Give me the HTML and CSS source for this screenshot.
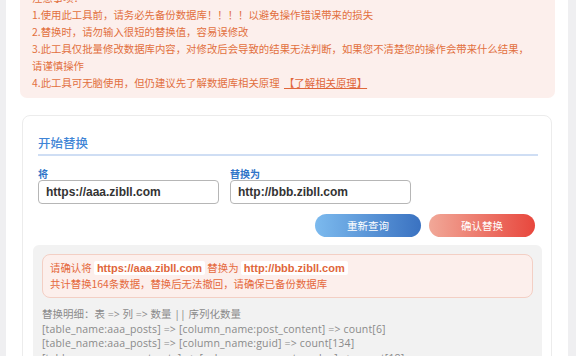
FILE: index.html
```html
<!DOCTYPE html>
<html lang="zh-CN">
<head>
<meta charset="utf-8">
<title>数据库批量替换</title>
<link rel="stylesheet" href="styles.css">
</head>
<body>
<div class="page">
  <div class="notice">
    <p>注意事项：</p>
    <p>1.使用此工具前，请务必先备份数据库！！！！以避免操作错误带来的损失</p>
    <p>2.替换时，请勿输入很短的替换值，容易误修改</p>
    <p>3.此工具仅批量修改数据库内容，对修改后会导致的结果无法判断，如果您不清楚您的操作会带来什么结果，请谨慎操作</p>
    <p>4.此工具可无脑使用，但仍建议先了解数据库相关原理 <a class="notice-link" href="#">【了解相关原理】</a></p>
  </div>

  <div class="card">
    <div class="card-title">开始替换</div>
    <div class="form-row">
      <div class="field">
        <label class="field-label">将</label>
        <input class="field-input" type="text" value="https://aaa.zibll.com">
      </div>
      <div class="field">
        <label class="field-label">替换为</label>
        <input class="field-input" type="text" value="http://bbb.zibll.com">
      </div>
    </div>
    <div class="actions">
      <button class="btn btn-blue" type="button">重新查询</button>
      <button class="btn btn-red" type="button">确认替换</button>
    </div>
    <div class="result">
      <div class="alert">
        <div>请确认将 <code class="hl">https://aaa.zibll.com</code> 替换为 <code class="hl">http://bbb.zibll.com</code></div>
        <div>共计替换164条数据，替换后无法撤回，请确保已备份数据库</div>
      </div>
      <div class="details">
        <div>替换明细：表 =&gt; 列 =&gt; 数量 || 序列化数量</div>
        <div class="row">[table_name:aaa_posts] =&gt; [column_name:post_content] =&gt; count[6]</div>
        <div class="row">[table_name:aaa_posts] =&gt; [column_name:guid] =&gt; count[134]</div>
        <div class="row">[table_name:aaa_postmeta] =&gt; [column_name:meta_value] =&gt; count[18]</div>
        <div class="row">[table_name:aaa_options] =&gt; [column_name:option_value] =&gt; count[6]</div>
      </div>
    </div>
  </div>
</div>
</body>
</html>
```
FILE: styles.css
```css
html, body {
  margin: 0;
  padding: 0;
}
body {
  background: #efeff1;
  font-family: "Noto Sans CJK SC", sans-serif;
  overflow: hidden;
}
.page {
  margin: -17px 8px 0 6px;
  padding: 0 13px 40px 14px;
  background: #ffffff;
  min-height: 420px;
}
.notice {
  background: #fcefec;
  border-radius: 0 0 7px 7px;
  padding: 6px 26px 7px 12px;
  color: #e26f3e;
  font-size: 10.4px;
  line-height: 17px;
}
.notice p {
  margin: 0;
}
.notice-link {
  color: #e0663a;
  text-decoration: underline;
  margin-left: 2px;
}
.card {
  margin: 17px 3px 0 2px;
  border: 1px solid #ececec;
  border-radius: 8px;
  padding: 17px 13px 0 15px;
  background: #fff;
}
.card-title {
  font-size: 12.5px;
  line-height: 20px;
  font-weight: 500;
  color: #3f85d6;
  padding-bottom: 1px;
  border-bottom: 2px solid #cfdef4;
}
.form-row {
  display: grid;
  grid-template-columns: 181px 181px;
  column-gap: 11px;
  margin-top: 12px;
}
.field {
  display: flex;
  flex-direction: column;
}
.field-label {
  font-size: 10px;
  line-height: 12px;
  font-weight: bold;
  color: #2f74c8;
}
.field-input {
  box-sizing: border-box;
  height: 24px;
  margin: 0;
  padding: 0 7px;
  border: 1px solid #b6b6b6;
  border-radius: 4px;
  background: #fff;
  font-family: "Liberation Sans", Arial, sans-serif;
  font-weight: bold;
  font-size: 12px;
  color: #333;
  outline: none;
}
.actions {
  display: flex;
  justify-content: flex-end;
  gap: 8px;
  margin-top: 10px;
  padding-right: 3px;
}
.btn {
  width: 106px;
  height: 23px;
  border: none;
  border-radius: 12px;
  color: #fff;
  font-family: "Noto Sans CJK SC", sans-serif;
  font-size: 10.5px;
  padding: 0;
  cursor: pointer;
}
.btn-blue {
  background: linear-gradient(90deg, #7cbaee, #3a72c1);
}
.btn-red {
  background: linear-gradient(90deg, #f1a898, #e8473d);
}
.result {
  margin: 8px -4px 0 -5px;
  background: #f2f2f2;
  border-radius: 6px 6px 0 0;
  padding: 9px 9px 20px;
}
.alert {
  border: 1px solid #f3cfc4;
  background: #fcefec;
  border-radius: 8px;
  padding: 5px 7px;
  color: #e5693d;
  font-size: 10.4px;
  line-height: 16px;
}
.hl {
  background: #fff;
  font-family: "Liberation Sans", Arial, sans-serif;
  font-weight: bold;
  font-size: 11px;
  padding: 1px 3px;
  border-radius: 2px;
  color: #e0663a;
}
.details {
  margin-top: 9px;
  color: #8a8a8a;
  font-family: "Open Sans", "Noto Sans CJK SC", sans-serif;
  font-size: 10.5px;
  line-height: 14.5px;
}
.details .row {
  letter-spacing: 0.16px;
}
```
